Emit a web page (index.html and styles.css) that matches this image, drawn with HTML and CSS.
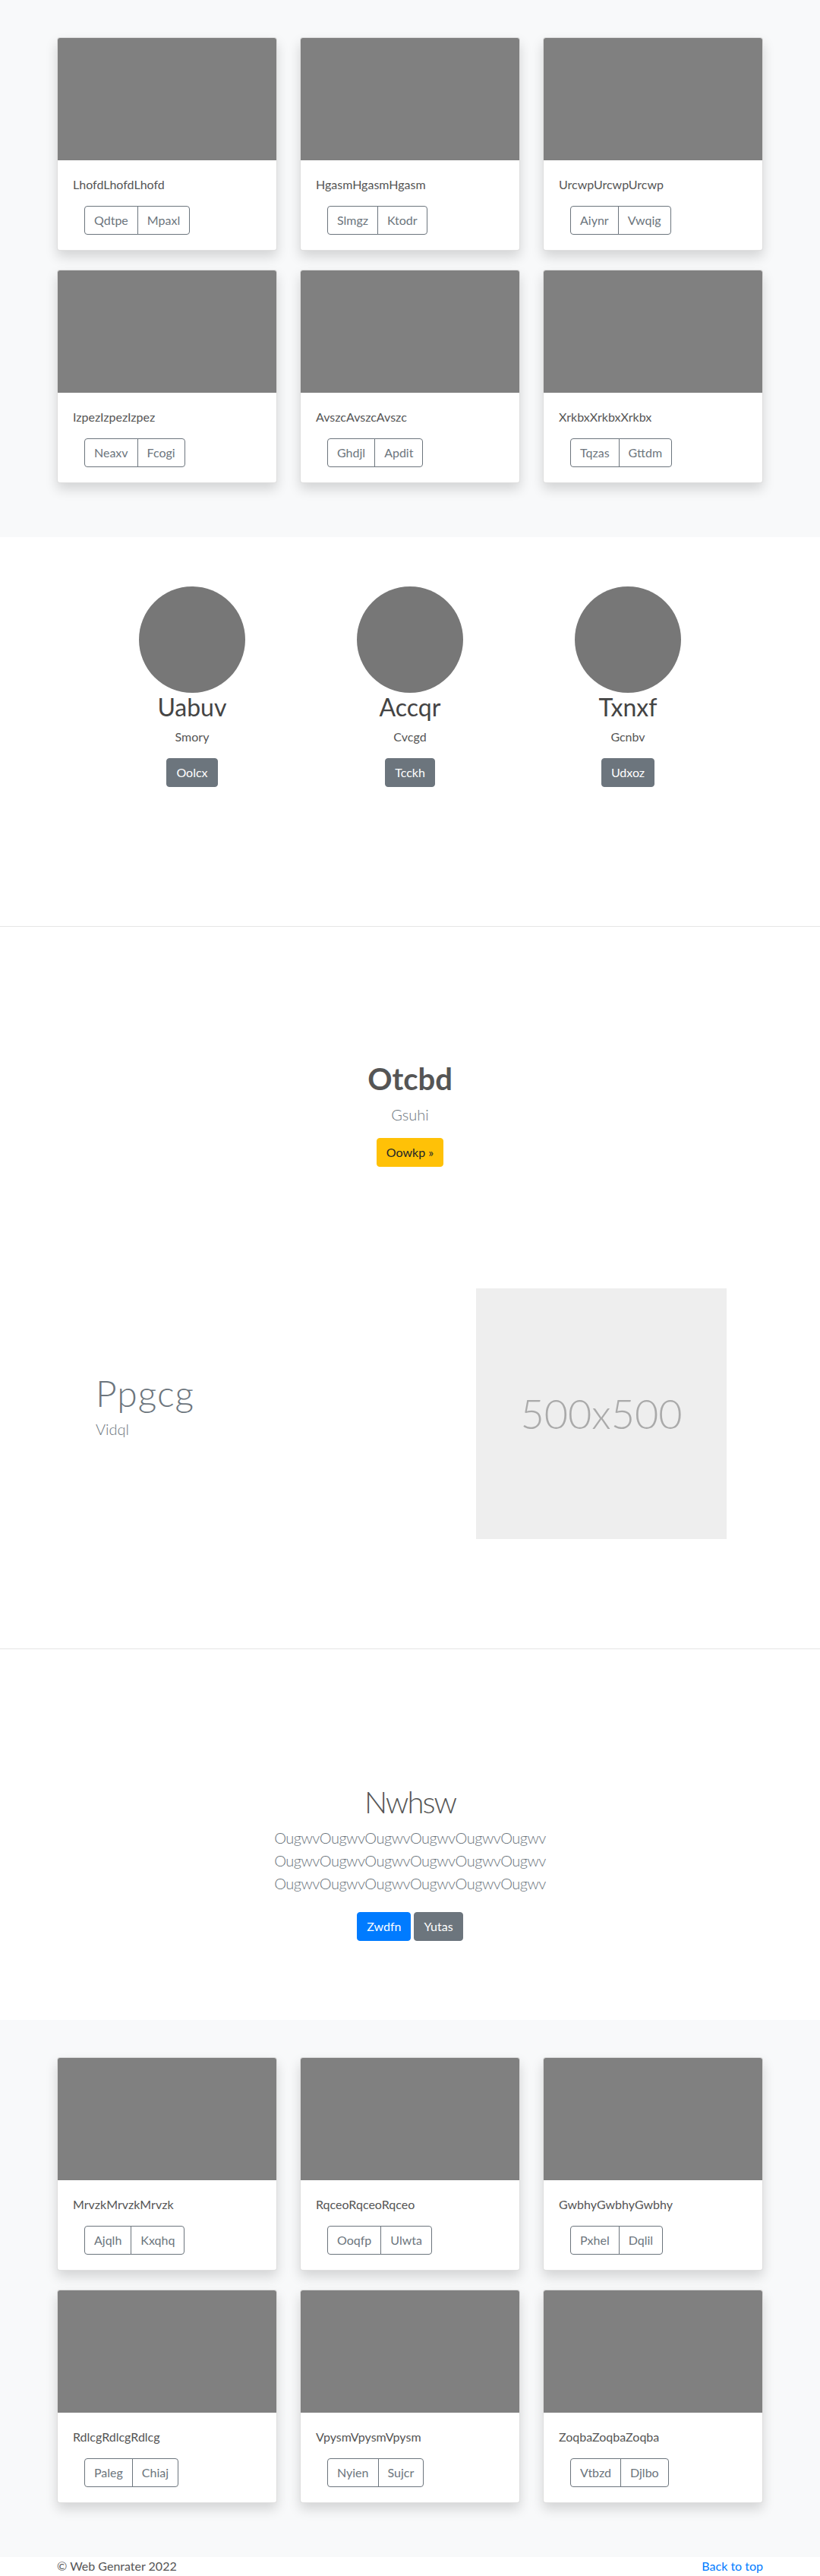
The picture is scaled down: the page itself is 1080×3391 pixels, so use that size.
FILE: index.html
```html
<!DOCTYPE html>
<html lang="en">
<head>
<meta charset="utf-8">
<title>Web Genrater</title>
<link rel="stylesheet" href="styles.css">
</head>
<body>

<section class="album album-top">
  <div class="container">
    <div class="card-grid">
      <div class="card"><div class="card-img"></div><div class="card-body"><p class="card-text">LhofdLhofdLhofd</p><div class="btn-group"><button class="btn btn-outline">Qdtpe</button><button class="btn btn-outline">Mpaxl</button></div></div></div>
      <div class="card"><div class="card-img"></div><div class="card-body"><p class="card-text">HgasmHgasmHgasm</p><div class="btn-group"><button class="btn btn-outline">Slmgz</button><button class="btn btn-outline">Ktodr</button></div></div></div>
      <div class="card"><div class="card-img"></div><div class="card-body"><p class="card-text">UrcwpUrcwpUrcwp</p><div class="btn-group"><button class="btn btn-outline">Aiynr</button><button class="btn btn-outline">Vwqig</button></div></div></div>
      <div class="card"><div class="card-img"></div><div class="card-body"><p class="card-text">IzpezIzpezIzpez</p><div class="btn-group"><button class="btn btn-outline">Neaxv</button><button class="btn btn-outline">Fcogi</button></div></div></div>
      <div class="card"><div class="card-img"></div><div class="card-body"><p class="card-text">AvszcAvszcAvszc</p><div class="btn-group"><button class="btn btn-outline">Ghdjl</button><button class="btn btn-outline">Apdit</button></div></div></div>
      <div class="card"><div class="card-img"></div><div class="card-body"><p class="card-text">XrkbxXrkbxXrkbx</p><div class="btn-group"><button class="btn btn-outline">Tqzas</button><button class="btn btn-outline">Gttdm</button></div></div></div>
    </div>
  </div>
</section>

<section class="team">
  <div class="team-grid">
    <div class="member">
      <div class="avatar"></div>
      <h2 class="member-name">Uabuv</h2>
      <p class="member-role">Smory</p>
      <button class="btn btn-secondary">Oolcx</button>
    </div>
    <div class="member">
      <div class="avatar"></div>
      <h2 class="member-name">Accqr</h2>
      <p class="member-role">Cvcgd</p>
      <button class="btn btn-secondary">Tcckh</button>
    </div>
    <div class="member">
      <div class="avatar"></div>
      <h2 class="member-name">Txnxf</h2>
      <p class="member-role">Gcnbv</p>
      <button class="btn btn-secondary">Udxoz</button>
    </div>
  </div>
</section>

<section class="feature">
  <div class="hero">
    <h1 class="hero-title">Otcbd</h1>
    <p class="hero-lead">Gsuhi</p>
    <button class="btn btn-warning">Oowkp &raquo;</button>
  </div>
  <div class="featurette">
    <div class="featurette-text">
      <h2 class="featurette-heading">Ppgcg</h2>
      <p class="featurette-lead">Vidql</p>
    </div>
    <div class="placeholder"><span class="placeholder-label">500x500</span></div>
  </div>
</section>

<section class="jumbo">
  <h1 class="jumbo-title">Nwhsw</h1>
  <p class="jumbo-lead">OugwvOugwvOugwvOugwvOugwvOugwv OugwvOugwvOugwvOugwvOugwvOugwv OugwvOugwvOugwvOugwvOugwvOugwv</p>
  <div class="jumbo-actions">
    <button class="btn btn-primary">Zwdfn</button>
    <button class="btn btn-secondary">Yutas</button>
  </div>
</section>

<section class="album album-bottom">
  <div class="container">
    <div class="card-grid">
      <div class="card"><div class="card-img"></div><div class="card-body"><p class="card-text">MrvzkMrvzkMrvzk</p><div class="btn-group"><button class="btn btn-outline">Ajqlh</button><button class="btn btn-outline">Kxqhq</button></div></div></div>
      <div class="card"><div class="card-img"></div><div class="card-body"><p class="card-text">RqceoRqceoRqceo</p><div class="btn-group"><button class="btn btn-outline">Ooqfp</button><button class="btn btn-outline">Ulwta</button></div></div></div>
      <div class="card"><div class="card-img"></div><div class="card-body"><p class="card-text">GwbhyGwbhyGwbhy</p><div class="btn-group"><button class="btn btn-outline">Pxhel</button><button class="btn btn-outline">Dqlil</button></div></div></div>
      <div class="card"><div class="card-img"></div><div class="card-body"><p class="card-text">RdlcgRdlcgRdlcg</p><div class="btn-group"><button class="btn btn-outline">Paleg</button><button class="btn btn-outline">Chiaj</button></div></div></div>
      <div class="card"><div class="card-img"></div><div class="card-body"><p class="card-text">VpysmVpysmVpysm</p><div class="btn-group"><button class="btn btn-outline">Nyien</button><button class="btn btn-outline">Sujcr</button></div></div></div>
      <div class="card"><div class="card-img"></div><div class="card-body"><p class="card-text">ZoqbaZoqbaZoqba</p><div class="btn-group"><button class="btn btn-outline">Vtbzd</button><button class="btn btn-outline">Djlbo</button></div></div></div>
    </div>
  </div>
</section>

<footer class="footer">
  <div class="container footer-inner">
    <p class="copyright">&copy; Web Genrater 2022</p>
    <a class="back-top" href="#">Back to top</a>
  </div>
</footer>

</body>
</html>
```

FILE: styles.css
```css
* {
  box-sizing: border-box;
}

html, body {
  margin: 0;
  padding: 0;
}

body {
  font-family: "Lato", "Open Sans", "Liberation Sans", sans-serif;
  font-size: 16px;
  line-height: 1.5;
  color: #212529;
  background: #fff;
}

h1, h2, p {
  margin: 0;
}

.container {
  width: 930px;
  margin: 0 auto;
}

/* Buttons */
.btn {
  display: inline-block;
  font-family: inherit;
  font-size: 16px;
  line-height: 24px;
  padding: 6px 12px;
  border: 1px solid transparent;
  border-radius: 4px;
  cursor: pointer;
  vertical-align: middle;
}

.btn-outline {
  background: transparent;
  color: #6c757d;
  border-color: #6c757d;
}

.btn-secondary {
  background: #6c757d;
  border-color: #6c757d;
  color: #fff;
}

.btn-primary {
  background: #007bff;
  border-color: #007bff;
  color: #fff;
}

.btn-warning {
  background: #ffc107;
  border-color: #ffc107;
  color: #212529;
}

.btn-group {
  display: inline-flex;
  margin-left: 15px;
}

.btn-group .btn {
  border-radius: 0;
}

.btn-group .btn:first-child {
  border-radius: 4px 0 0 4px;
}

.btn-group .btn + .btn {
  margin-left: -1px;
  border-radius: 0 4px 4px 0;
}

/* Album */
.album {
  background: #f8f9fa;
  padding: 49px 0 47px;
}

.card-grid {
  display: grid;
  grid-template-columns: repeat(3, 290px);
  column-gap: 30px;
  row-gap: 25px;
  padding-bottom: 24px;
}

.card {
  background: #fff;
  border: 1px solid rgba(0, 0, 0, 0.125);
  border-radius: 4px;
  box-shadow: 0 8px 16px rgba(0, 0, 0, 0.15);
  overflow: hidden;
}

.card-img {
  height: 161px;
  background: #808080;
}

.card-body {
  padding: 20px;
}

.card-text {
  color: #555;
  margin-bottom: 16px;
}

/* Team */
.team {
  padding: 65px 0 183px;
  border-bottom: 1px solid #e5e5e5;
}

.team-grid {
  display: grid;
  grid-template-columns: repeat(3, 287px);
  justify-content: center;
  text-align: center;
}

.avatar {
  width: 140px;
  height: 140px;
  border-radius: 50%;
  background: #777;
  margin: 0 auto;
}

.member-name {
  font-size: 32px;
  font-weight: 400;
  line-height: 38.4px;
  color: #444;
  margin-bottom: 8px;
}

.member-role {
  color: #555;
  margin-bottom: 16px;
}

/* Feature */
.feature {
  padding: 176px 0 144px;
  border-bottom: 1px solid #e5e5e5;
}

.hero {
  text-align: center;
}

.hero-title {
  font-size: 40px;
  font-weight: 700;
  line-height: 48px;
  color: #555;
  margin-bottom: 8px;
}

.hero-lead {
  font-size: 20px;
  font-weight: 300;
  line-height: 30px;
  color: #6c757d;
  margin-bottom: 16px;
}

.featurette {
  display: grid;
  grid-template-columns: 1fr 330px;
  align-items: center;
  width: 831px;
  margin: 160px 0 0 126px;
}

.featurette-heading {
  font-size: 48px;
  font-weight: 300;
  line-height: 57.6px;
  letter-spacing: 1px;
  color: #6c757d;
  margin-bottom: 4px;
}

.featurette-lead {
  font-size: 20px;
  font-weight: 300;
  line-height: 30px;
  color: #6c757d;
  margin-bottom: 22px;
}

.placeholder {
  width: 330px;
  height: 330px;
  background: #eee;
  display: flex;
  align-items: center;
  justify-content: center;
}

.placeholder-label {
  font-size: 54px;
  font-weight: 300;
  color: #aaa;
  line-height: 1;
}

/* Jumbo */
.jumbo {
  padding: 177px 0 104px;
  text-align: center;
}

.jumbo-title {
  font-size: 40px;
  font-weight: 300;
  line-height: 48px;
  letter-spacing: -2px;
  color: #555;
  margin-bottom: 8px;
}

.jumbo-lead {
  width: 450px;
  margin: 0 auto 23px;
  font-size: 20px;
  font-weight: 300;
  line-height: 30px;
  letter-spacing: -0.5px;
  color: #6c757d;
}

.jumbo-actions {
  display: flex;
  justify-content: center;
  gap: 4px;
}

/* Footer */
.footer {
  background: #fff;
}

.footer-inner {
  display: flex;
  justify-content: space-between;
  line-height: 24px;
}

.copyright {
  color: #555;
}

.back-top {
  color: #007bff;
  text-decoration: none;
}
```
